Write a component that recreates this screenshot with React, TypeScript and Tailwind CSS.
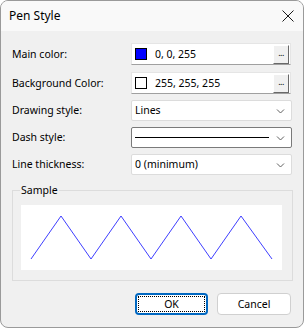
import React from "react";

const font = { fontFamily: '"Noto Sans", "Segoe UI", sans-serif' };

function Chevron() {
  return (
    <svg width="9" height="6" viewBox="0 0 9 6" className="shrink-0">
      <path d="M1 1.5 L4.5 5 L8 1.5" fill="none" stroke="#606060" strokeWidth="1" />
    </svg>
  );
}

function ColorField({ swatch, value }: { swatch: string; value: string }) {
  return (
    <div className="w-[160px] h-[22px] bg-white border border-[#e5e5e5] border-b-[#a0a0a0] flex items-center pl-[3px] pr-[1px]">
      <div className="w-[12px] h-[12px] border border-black" style={{ background: swatch }} />
      <span className="ml-[8px] flex-1 text-[10.5px] text-black leading-none">{value}</span>
      <div className="w-[16px] h-[19px] bg-[#f0f0f0] border-t border-l border-t-white border-l-white border-r border-b border-r-[#696969] border-b-[#696969] flex items-end justify-center pb-[6px]">
        <span className="text-[9px] leading-none text-black tracking-[-0.5px]">...</span>
      </div>
    </div>
  );
}

function Combo({ children, dark }: { children: React.ReactNode; dark?: boolean }) {
  return (
    <div
      className={
        "w-[161px] h-[21px] bg-white border flex items-center pl-[3px] pr-[6px] rounded-[2px] " +
        (dark ? "border-[#7a7a7a]" : "border-[#dcdcdc]")
      }
    >
      <div className="flex-1 flex items-center text-[10.5px] text-black leading-none">{children}</div>
      <Chevron />
    </div>
  );
}

function Row({ label, children, mt }: { label: string; children: React.ReactNode; mt: string }) {
  return (
    <div className={"flex items-center " + mt}>
      <div className="w-[119px] text-[10.5px] text-black leading-none">{label}</div>
      {children}
    </div>
  );
}

export default function App() {
  return (
    <div style={font} className="w-[304px] h-[328px] border border-[#9a9a9a] rounded-[8px] overflow-hidden flex flex-col bg-[#f0f0f0]">
      <div className="h-[30px] bg-[#f9f9f9] flex items-center pl-[8px] pr-[9px] shrink-0">
        <span className="flex-1 text-[12px] text-black leading-none">Pen Style</span>
        <svg width="12" height="12" viewBox="0 0 12 12">
          <path d="M0.5 0.5 L11.5 11.5 M11.5 0.5 L0.5 11.5" stroke="#1a1a1a" strokeWidth="1" fill="none" />
        </svg>
      </div>
      <div className="flex-1 flex flex-col pl-[11px] pr-[11px]">
        <Row label="Main color:" mt="mt-[12px]">
          <ColorField swatch="#0000ff" value="0, 0, 255" />
        </Row>
        <Row label="Background Color:" mt="mt-[7px]">
          <ColorField swatch="#ffffff" value="255, 255, 255" />
        </Row>
        <Row label="Drawing style:" mt="mt-[6px]">
          <Combo>Lines</Combo>
        </Row>
        <Row label="Dash style:" mt="mt-[6px]">
          <Combo dark>
            <div className="w-[134px] h-[1px] bg-black" />
          </Combo>
        </Row>
        <Row label="Line thickness:" mt="mt-[6px]">
          <Combo>0 (minimum)</Combo>
        </Row>
        <fieldset className="mt-[8px] w-[281px] border border-[#dcdcdc] pl-[8px] pr-[10px] pb-[10px]">
          <legend className="text-[10.5px] leading-[14px] text-black px-[1px] -ml-[1px]">Sample</legend>
          <div className="mt-[8px] w-[261px] h-[65px] bg-white">
            <svg width="261" height="65" viewBox="0 0 261 65">
              <polyline
                points="10,54 40,11 70,54 100,11 130,54 160,11 190,54 220,11 251,54"
                fill="none"
                stroke="#3f3fff"
                strokeWidth="1"
              />
            </svg>
          </div>
        </fieldset>
        <div className="mt-[12px] flex justify-end gap-[9px] pr-[1px]">
          <button className="w-[73px] h-[22px] bg-white border-2 border-[#0067c0] rounded-[4px] flex items-center justify-center p-[1px]">
            <span className="w-full h-full border border-dotted border-black flex items-center justify-center text-[10.5px] text-black leading-none">
              OK
            </span>
          </button>
          <button className="w-[74px] h-[22px] bg-white border border-[#d0d0d0] rounded-[4px] text-[10.5px] text-black leading-none">
            Cancel
          </button>
        </div>
      </div>
    </div>
  );
}
